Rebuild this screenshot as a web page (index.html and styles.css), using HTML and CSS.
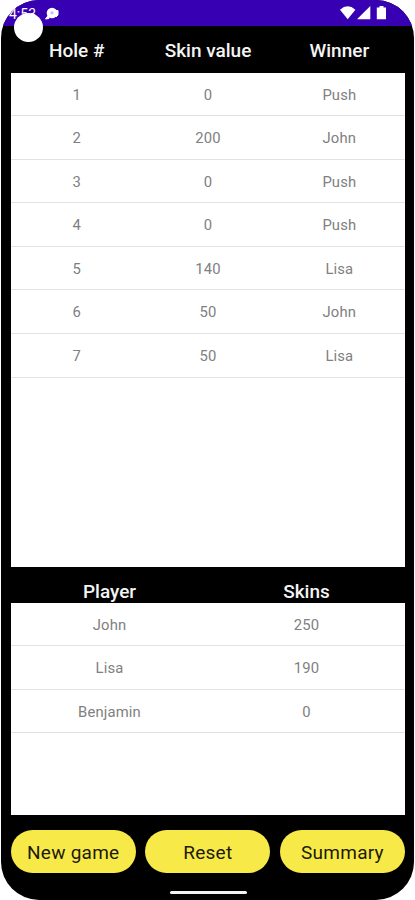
FILE: index.html
```html
<!DOCTYPE html>
<html lang="en">
<head>
<meta charset="utf-8">
<title>Skins</title>
<link rel="stylesheet" href="styles.css">
</head>
<body>
<div class="screen">
	<div class="statusbar">
		<span class="clock">4:53</span>
		<svg class="notif" width="15" height="13" viewBox="0 0 15 13">
			<circle cx="7" cy="6" r="5.3" fill="#fff"/>
			<path d="M3.5 8L.5 12l3.5-.5zM11 3.5h2V8l-2 2z" fill="#fff" stroke="#fff"/>
			<circle cx="7" cy="5.8" r="1.6" fill="#c9bbf0"/>
		</svg>
		<svg class="signals" width="48" height="14" viewBox="0 0 48 14">
			<path d="M0 3.7Q7.7-3 15.4 3.7L7.7 13.2z" fill="#fff"/>
			<path d="M17 13.3L30.3 0v13.3z" fill="#fff"/>
			<path d="M39.5 0h4v1.5H46v11.8h-9.2V1.5h2.7z" fill="#fff"/>
		</svg>
	</div>
	<div class="camera"></div>

	<div class="heading holes-heading">
		<span>Hole #</span><span>Skin value</span><span>Winner</span>
	</div>
	<div class="list holes">
		<div class="row"><span>1</span><span>0</span><span>Push</span></div>
		<div class="row"><span>2</span><span>200</span><span>John</span></div>
		<div class="row"><span>3</span><span>0</span><span>Push</span></div>
		<div class="row"><span>4</span><span>0</span><span>Push</span></div>
		<div class="row"><span>5</span><span>140</span><span>Lisa</span></div>
		<div class="row"><span>6</span><span>50</span><span>John</span></div>
		<div class="row"><span>7</span><span>50</span><span>Lisa</span></div>
	</div>

	<div class="heading players-heading">
		<span>Player</span><span>Skins</span>
	</div>
	<div class="list players">
		<div class="row"><span>John</span><span>250</span></div>
		<div class="row"><span>Lisa</span><span>190</span></div>
		<div class="row"><span>Benjamin</span><span>0</span></div>
	</div>

	<div class="buttons">
		<button class="btn">New game</button>
		<button class="btn">Reset</button>
		<button class="btn">Summary</button>
	</div>
	<div class="handle"></div>
</div>
</body>
</html>
```

FILE: styles.css
```css
* {
    box-sizing: border-box;
}
body {
    margin: 0;
    background: #fff;
    font-family: Roboto, sans-serif;
}
.screen {
    position: relative;
    display: flex;
    flex-direction: column;
    width: 413px;
    height: 900px;
    margin: 0 1px;
    padding: 0 9px 0 10px;
    background: #000;
    border-radius: 38px;
    overflow: hidden;
}
.statusbar {
    display: flex;
    align-items: flex-start;
    height: 26px;
    margin: 0 -9px 0 -10px;
    padding: 6px 26px 0 8px;
    background: #3700b3;
    color: #fff;
}
.clock {
    width: 29px;
    font-size: 14px;
    line-height: 16px;
}
.notif {
    margin: 1px 0 0 7px;
}
.signals {
    margin-left: auto;
}
.camera {
    position: absolute;
    left: 13px;
    top: 13px;
    width: 29px;
    height: 29px;
    border-radius: 50%;
    background: #fff;
}
.heading {
    display: flex;
    color: #f4f4f4;
    font-size: 19px;
    font-weight: 500;
    line-height: 22px;
    text-align: center;
}
.heading span,
.row span {
    flex: 1;
}
.holes-heading {
    height: 46.7px;
    padding-top: 14px;
}
.players-heading {
    height: 35.2px;
    padding-top: 14px;
}
.list {
    background: #fff;
}
.holes {
    height: 494.7px;
}
.players {
    height: 212.4px;
}
.row {
    display: flex;
    height: 43.55px;
    padding-top: 1px;
    border-bottom: 1px solid #e2e2e2;
    color: #808080;
    font-size: 14.8px;
    letter-spacing: 0.15px;
    line-height: 43px;
    text-align: center;
}
.buttons {
    display: flex;
    gap: 9.5px;
    margin: 15px 0 0 -0.3px;
}
.btn {
    flex: 1;
    height: 43px;
    padding: 2px 0 0;
    border: 0;
    border-radius: 22px;
    background: #f7e948;
    color: #1c1a08;
    font-family: inherit;
    font-size: 19px;
    letter-spacing: 0.25px;
}
.handle {
    width: 77px;
    height: 3px;
    margin: 18px auto 0;
    border-radius: 2px;
    background: #f4f4f4;
}
```
